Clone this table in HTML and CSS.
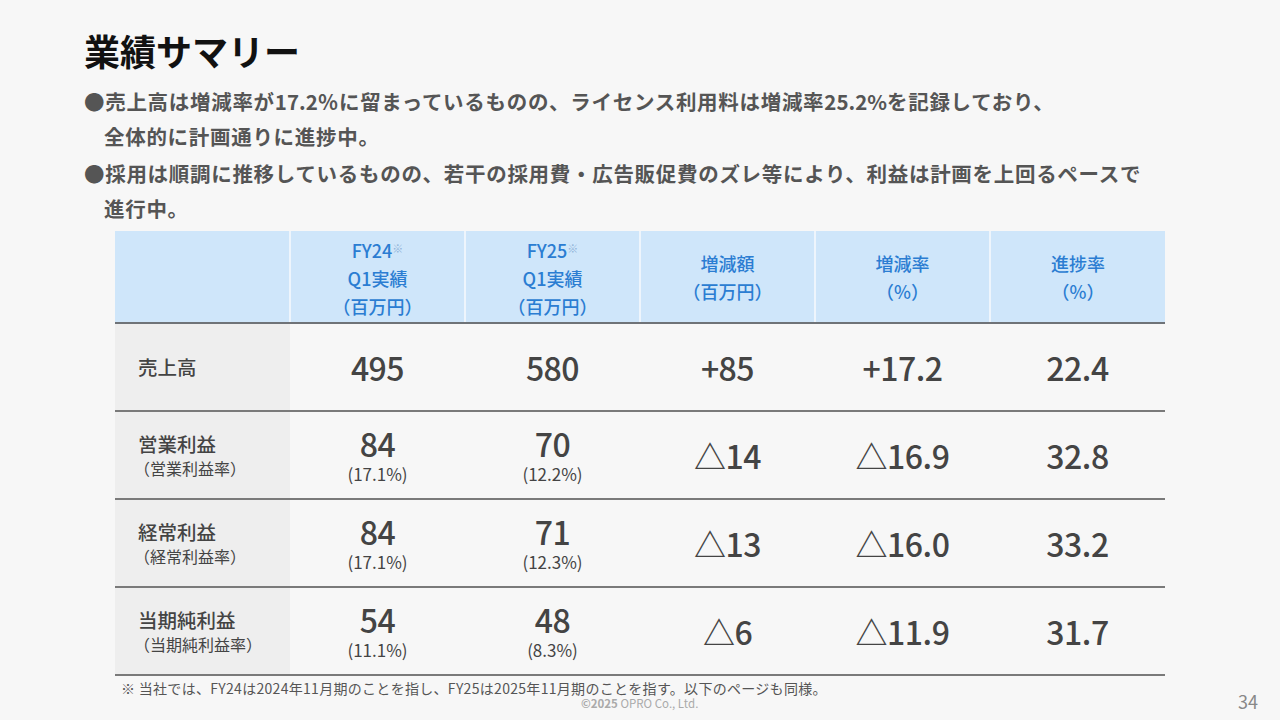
FILE: index.html
```html
<!DOCTYPE html>
<html lang="ja">
<head>
<meta charset="utf-8">
<link rel="stylesheet" href="styles.css">
</head>
<body>
<div class="slide">
  <h1 class="title">業績サマリー</h1>
  <div class="bullets">
    <p class="bullet">●売上高は増減率が<span class="lat">17.2</span>％に留まっているものの、ライセンス利用料は増減率<span class="lat">25.2%</span>を記録しており、<br>全体的に計画通りに進捗中。</p>
    <p class="bullet">●採用は順調に推移しているものの、若干の採用費・広告販促費のズレ等により、利益は計画を上回るペースで<br>進行中。</p>
  </div>
  <table class="summary">
    <thead>
      <tr>
        <th class="blank"></th>
        <th>FY24<span class="mark">※</span><br>Q1実績<br>（百万円）</th>
        <th>FY25<span class="mark">※</span><br>Q1実績<br>（百万円）</th>
        <th>増減額<br>（百万円）</th>
        <th>増減率<br>（%）</th>
        <th>進捗率<br>（%）</th>
      </tr>
    </thead>
    <tbody>
      <tr>
        <td class="label"><div class="main-label">売上高</div></td>
        <td><div class="num">495</div></td>
        <td><div class="num">580</div></td>
        <td><div class="num">+85</div></td>
        <td><div class="num">+17.2</div></td>
        <td><div class="num">22.4</div></td>
      </tr>
      <tr>
        <td class="label"><div class="main-label">営業利益</div><div class="sub-label">（営業利益率）</div></td>
        <td><div class="num">84</div><div class="sub">(17.1%)</div></td>
        <td><div class="num">70</div><div class="sub">(12.2%)</div></td>
        <td><div class="num">△14</div></td>
        <td><div class="num">△16.9</div></td>
        <td><div class="num">32.8</div></td>
      </tr>
      <tr>
        <td class="label"><div class="main-label">経常利益</div><div class="sub-label">（経常利益率）</div></td>
        <td><div class="num">84</div><div class="sub">(17.1%)</div></td>
        <td><div class="num">71</div><div class="sub">(12.3%)</div></td>
        <td><div class="num">△13</div></td>
        <td><div class="num">△16.0</div></td>
        <td><div class="num">33.2</div></td>
      </tr>
      <tr>
        <td class="label"><div class="main-label">当期純利益</div><div class="sub-label">（当期純利益率）</div></td>
        <td><div class="num">54</div><div class="sub">(11.1%)</div></td>
        <td><div class="num">48</div><div class="sub">(8.3%)</div></td>
        <td><div class="num">△6</div></td>
        <td><div class="num">△11.9</div></td>
        <td><div class="num">31.7</div></td>
      </tr>
    </tbody>
  </table>
  <p class="note">※ 当社では、FY24は2024年11月期のことを指し、FY25は2025年11月期のことを指す。以下のページも同様。</p>
  <div class="footer">
    <span class="copy"><b>©2025</b> OPRO Co., Ltd.</span>
    <span class="page">34</span>
  </div>
</div>
</body>
</html>
```

FILE: styles.css
```css
html, body {
  margin: 0;
  padding: 0;
  background: #f7f7f7;
}
body {
  font-family: "Noto Sans CJK JP", "Noto Sans", sans-serif;
  color: #444;
}
.slide {
  width: 1280px;
  height: 720px;
  box-sizing: border-box;
  padding: 26px 0 0 84px;
  position: relative;
  overflow: hidden;
}
.title {
  margin: 0;
  font-size: 36px;
  line-height: 48px;
  font-weight: 700;
  color: #111;
}
.bullets {
  margin-top: 10px;
  width: 1120px;
}
.bullet {
  margin: 0 0 2px 0;
  font-size: 20.5px;
  letter-spacing: 0.7px;
  line-height: 35px;
  font-weight: 700;
  color: #555;
  padding-left: 20px;
  text-indent: -20px;
  white-space: nowrap;
}
.bullet .lat {
  letter-spacing: 0;
}
.summary {
  margin: 5px 0 0 31px;
  width: 1050px;
  table-layout: fixed;
  border-collapse: collapse;
}
.summary th {
  background: #cfe6fa;
  color: #2b7dd2;
  font-weight: 500;
  font-size: 18px;
  line-height: 28px;
  height: 91px;
  padding: 0;
  text-align: center;
  vertical-align: middle;
  border-left: 2px solid #eef5fc;
  border-bottom: 2px solid #6f7378;
}
.summary th.blank {
  border-left: none;
}
.summary .mark {
  font-size: 11px;
  color: #8fb3d9;
  vertical-align: 5px;
}
.summary td {
  height: 86px;
  padding: 0;
  text-align: center;
  vertical-align: middle;
  border-bottom: 2px solid #7a7a7a;
}
.summary td.label {
  background: #eeeeee;
  text-align: left;
  padding-left: 23px;
}
.main-label {
  font-size: 19.5px;
  line-height: 26px;
  font-weight: 500;
  color: #444;
}
.sub-label {
  font-size: 16px;
  line-height: 22px;
  color: #444;
  margin-left: -4px;
}
.num {
  font-size: 32px;
  line-height: 38px;
  font-weight: 500;
  color: #444;
  letter-spacing: -0.5px;
}
.sub {
  font-size: 17px;
  line-height: 24px;
  color: #444;
}
.note {
  margin: 4px 0 0 37px;
  font-size: 14px;
  letter-spacing: 0.3px;
  line-height: 16px;
  color: #555;
}
.footer {
  position: absolute;
  left: 0;
  right: 0;
  bottom: 8px;
  height: 20px;
}
.copy {
  position: absolute;
  left: 581px;
  top: 5px;
  font-size: 11.5px;
  line-height: 12px;
  color: #aaa;
}
.copy b {
  font-weight: 700;
}
.page {
  position: absolute;
  left: 1238px;
  top: -4px;
  font-size: 18px;
  color: #888;
}
```
